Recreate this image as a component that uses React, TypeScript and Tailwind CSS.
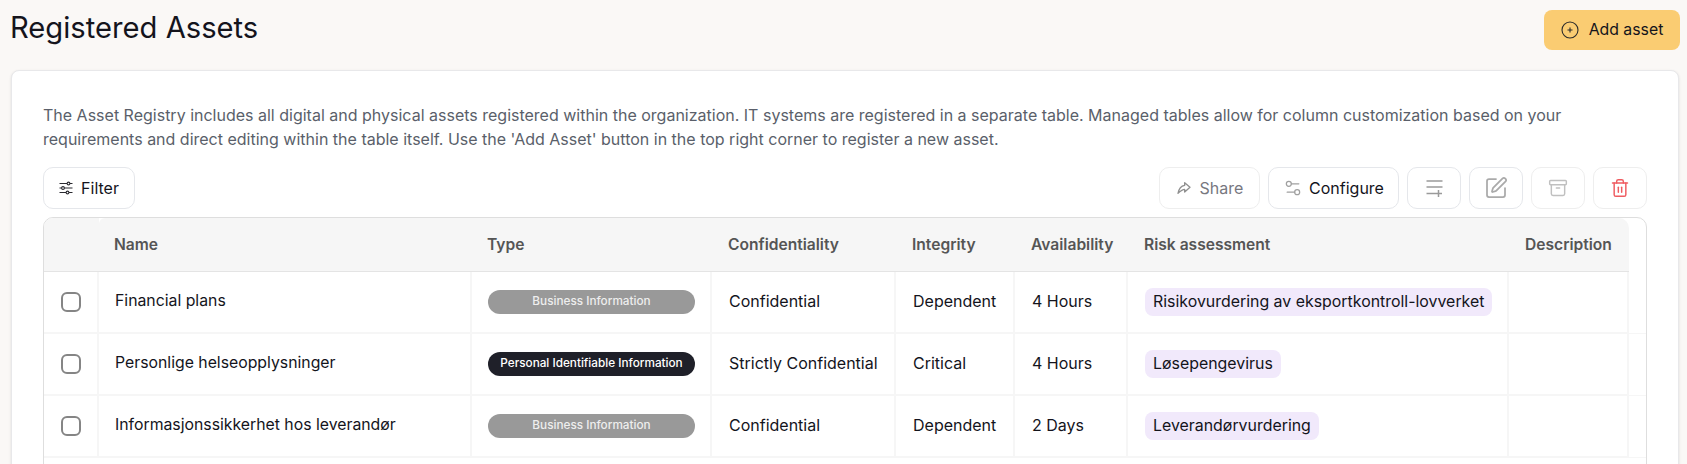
import { Archive, Settings2, SquarePen, Trash2 } from "lucide-react";
import { TbShare3 } from "react-icons/tb";

const rows = [
  { name: "Financial plans", type: "Business Information", dark: false, conf: "Confidential", integrity: "Dependent", avail: "4 Hours", risk: "Risikovurdering av eksportkontroll-lovverket" },
  { name: "Personlige helseopplysninger", type: "Personal Identifiable Information", dark: true, conf: "Strictly Confidential", integrity: "Critical", avail: "4 Hours", risk: "Løsepengevirus" },
  { name: "Informasjonssikkerhet hos leverandør", type: "Business Information", dark: false, conf: "Confidential", integrity: "Dependent", avail: "2 Days", risk: "Leverandørvurdering" },
];

const cell = "h-[62px] border-b-2 border-r-2 border-[#f6f6f6]";
const textCell = `${cell} pb-[2px] pl-[17px]`;
const headCell = "h-[54px] border-b border-[#e4e4e4] bg-[#f6f6f6] pl-4 font-semibold";

function Row({ r }: { r: (typeof rows)[number] }) {
  return (
    <tr>
      <td className={`${cell} pl-[17px]`}>
        <div className="h-5 w-5 rounded-[6px] border-2 border-[#858585]" />
      </td>
      <td className={`${cell} pb-[2px] pl-4 text-[15.8px]`}>{r.name}</td>
      <td className={`${cell} pl-4`}>
        <div className={`mr-[15px] flex h-6 items-center justify-center rounded-full text-[11.75px] font-medium ${r.dark ? "bg-[#1f2029] text-white" : "bg-[#999999] text-[#eeeeee]"}`}>{r.type}</div>
      </td>
      <td className={textCell}>{r.conf}</td>
      <td className={textCell}>{r.integrity}</td>
      <td className={textCell}>{r.avail}</td>
      <td className={`${cell} pl-[17px]`}>
        <span className="inline-flex h-7 items-center rounded-lg bg-[#f1e9fb] px-2 text-[15.9px]">{r.risk}</span>
      </td>
      <td className={cell} />
      <td className="border-b border-[#f6f6f6]" />
    </tr>
  );
}

function FilterIcon() {
  return (
    <svg width="14" height="14" viewBox="0 0 14 14" fill="none" stroke="#2a2a30" strokeWidth="1.1">
      <path d="M0.5 2.5h13M0.5 7h13M0.5 11.5h13" />
      <circle cx="9.5" cy="2.5" r="1.4" fill="white" />
      <circle cx="4" cy="7" r="1.4" fill="white" />
      <circle cx="8.5" cy="11.5" r="1.4" fill="white" />
    </svg>
  );
}

function ListPlusIcon() {
  return (
    <svg width="17" height="17" viewBox="0 0 17 17" fill="none" stroke="#9a9a9a" strokeWidth="1.5">
      <path d="M0.5 1h16M0.5 7h16M0.5 13.5h8.5M12.5 10v7M9 13.5h7" />
    </svg>
  );
}

function PlusCircleIcon() {
  return (
    <svg width="18" height="18" viewBox="0 0 18 18" fill="none" stroke="#2a2a2a" strokeWidth="1.1">
      <circle cx="9" cy="9" r="8" />
      <path d="M9 6.5v5M6.5 9h5" />
    </svg>
  );
}

export default function App() {
  return (
    <div className="h-[464px] overflow-hidden bg-[#faf8f6] font-['Inter',sans-serif] text-[#14141c]">
      <div className="flex h-[70px] items-start justify-between pl-[10px] pr-[7px] pt-[10px]">
        <h1 className="text-[29.2px] leading-9">Registered Assets</h1>
        <button className="flex h-10 w-[136px] items-center justify-center gap-[10px] rounded-lg bg-[#facc72] text-[15.8px]">
          <PlusCircleIcon />Add asset
        </button>
      </div>
      <div className="ml-[11px] mr-2 h-[400px] rounded-t-lg border border-[#e8e8ea] bg-white pl-[31px] pr-[31px] pt-[32px] shadow-sm">
        <p className="max-w-[1540px] text-[16px] leading-6 text-[#5a5f6a]">The Asset Registry includes all digital and physical assets registered within the organization. IT systems are registered in a separate table. Managed tables allow for column customization based on your requirements and direct editing within the table itself. Use the 'Add Asset' button in the top right corner to register a new asset.</p>
        <div className="mt-4 flex h-[42px] justify-between">
          <button className="flex w-[92px] items-center justify-center gap-2 rounded-[10px] border border-[#e5e7eb]">
            <FilterIcon />Filter
          </button>
          <div className="flex gap-2">
            <button className="flex w-[101px] items-center justify-center gap-2 rounded-[10px] border border-[#eeeeee] text-[#77777f]">
              <TbShare3 size={16} color="#8f8f8f" />Share
            </button>
            <button className="flex w-[131px] items-center justify-center gap-[6px] rounded-[10px] border border-[#e5e7eb]">
              <Settings2 className="h-5 w-5 text-[#a0a0a0]" strokeWidth={1.5} />Configure
            </button>
            <button className="flex w-[54px] items-center justify-center rounded-[10px] border border-[#e5e7eb]"><ListPlusIcon /></button>
            <button className="flex w-[54px] items-center justify-center rounded-[10px] border border-[#e5e7eb]"><SquarePen className="h-6 w-6 text-[#aaaaaa]" strokeWidth={1.75} /></button>
            <button className="flex w-[54px] items-center justify-center rounded-[10px] border border-[#eeeeee]"><Archive className="h-5 w-5 text-[#c0c0c0]" strokeWidth={1.75} /></button>
            <button className="flex w-[54px] items-center justify-center rounded-[10px] border border-[#eeeeee]"><Trash2 className="h-5 w-5 text-[#ef5b60]" strokeWidth={1.75} /></button>
          </div>
        </div>
        <div className="mt-2 h-[300px] overflow-hidden rounded-t-[10px] border border-[#dedede]">
          <table className="w-full table-fixed border-separate border-spacing-0">
            <colgroup>
              <col className="w-[55px]" /><col className="w-[373px]" /><col className="w-[240px]" /><col className="w-[184px]" /><col className="w-[119px]" /><col className="w-[113px]" /><col className="w-[381px]" /><col /><col className="w-[17px]" />
            </colgroup>
            <thead>
              <tr className="text-left text-[15.6px] text-[#555555]">
                <th className={headCell} /><th className={`${headCell} rounded-tl-[6px] !pl-[15px]`}>Name</th><th className={`${headCell} !pl-[15px]`}>Type</th><th className={headCell}>Confidentiality</th><th className={headCell}>Integrity</th><th className={headCell}>Availability</th><th className={headCell}>Risk assessment</th><th className={`${headCell} rounded-tr-[10px]`}>Description</th><th />
              </tr>
            </thead>
            <tbody>{rows.map((r) => <Row key={r.name} r={r} />)}</tbody>
          </table>
        </div>
      </div>
    </div>
  );
}
